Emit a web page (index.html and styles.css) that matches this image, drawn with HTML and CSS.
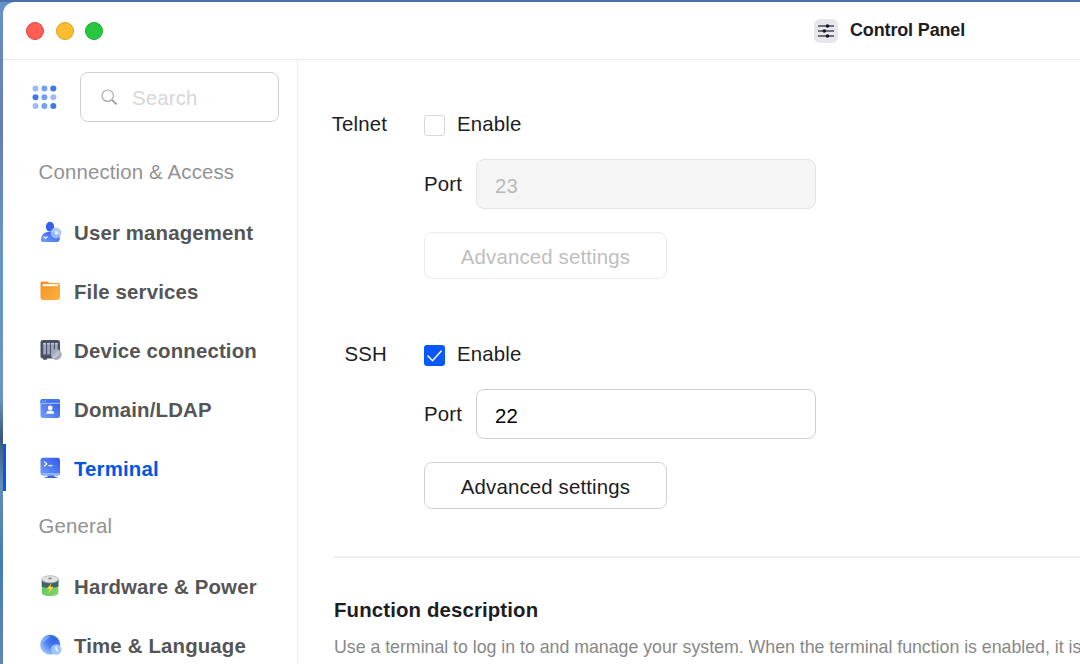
FILE: index.html
```html
<!DOCTYPE html>
<html lang="en">
<head>
<meta charset="utf-8">
<title>Control Panel</title>
<link rel="stylesheet" href="styles.css">
</head>
<body>
<div class="window">
  <header class="titlebar">
    <div class="lights"><span class="light red"></span><span class="light yellow"></span><span class="light green"></span></div>
    <div class="title">
      <svg class="title-icon" viewBox="0 0 24 24"><rect width="24" height="24" rx="6" fill="#e7e6ea"/><path d="M4 7H20M4 12H20M4 17H20" stroke="#4a4a5e" stroke-width="1.3"/><g fill="#15152a"><circle cx="13.5" cy="7" r="1.8"/><circle cx="10.3" cy="12" r="1.8"/><circle cx="13.5" cy="17" r="1.8"/></g></svg>
      <h1>Control Panel</h1>
    </div>
  </header>
  <div class="body">
    <aside class="sidebar">
      <div class="tools">
        <svg class="launcher" viewBox="0 0 25 25"><g fill="#3f78ea"><circle cx="3.5" cy="3.5" r="3" opacity=".5"/><circle cx="12.4" cy="3.5" r="3" opacity=".7"/><circle cx="21.3" cy="3.5" r="3"/><circle cx="3.5" cy="12.3" r="3"/><circle cx="12.4" cy="12.3" r="3" opacity=".7"/><circle cx="21.3" cy="12.3" r="3" opacity=".5"/><circle cx="3.5" cy="21.1" r="3" opacity=".5"/><circle cx="12.4" cy="21.1" r="3" opacity=".7"/><circle cx="21.3" cy="21.1" r="3"/></g></svg>
        <div class="search">
          <svg class="search-icon" viewBox="0 0 17 17"><circle cx="6.7" cy="6.7" r="5.7" fill="none" stroke="#a9a9a9" stroke-width="1.2"/><path d="M10.9 10.9L15.6 15.4" stroke="#999" stroke-width="1.7"/></svg>
          <span>Search</span>
        </div>
      </div>
      <h2 class="group">Connection &amp; Access</h2>
      <nav>
        <a class="item">
          <svg class="icon" viewBox="0 0 22 22"><defs><linearGradient id="blue" x1="0" y1="1" x2="1" y2="0"><stop stop-color="#77a1fa"/><stop offset="1" stop-color="#2c56e9"/></linearGradient></defs><path d="M1 19C1 14.500 3.500 11.500 8 11h5c4.500.5 6.800 3.500 6.800 6.500 0 2.200-1 3.500-3 3.500H3C1.500 21 1 20.500 1 19Z" fill="url(#blue)"/><ellipse cx="10" cy="5.800" rx="4.100" ry="5" fill="#3560eb"/><circle cx="16" cy="12" r="5.400" fill="#a4c2fd" opacity=".85"/><circle cx="16.300" cy="12" r="1.700" fill="#e7f0ff"/><path d="M3.500 15.500l2 2 2-2" fill="none" stroke="#e9f0ff" stroke-width="1.200"/></svg>
          <span>User management</span></a>
        <a class="item">
          <svg class="icon" viewBox="0 0 22 22"><defs><linearGradient id="orange" x1="0" y1="0" x2="1" y2="1"><stop stop-color="#f28e28"/><stop offset="1" stop-color="#ffb23b"/></linearGradient></defs><path d="M.5 4.500V3C.5 2 1.200 1.500 2 1.500h5.500L9.200 3h8.300C19 3 20 4 20 5.500V17c0 2-1 3-3 3H3.500c-2 0-3-1-3-3Z" fill="url(#orange)"/><path d="M2.500 6.200V5c0-.7.400-1 1-1h13.600c.6 0 1 .3 1 1v1.200Z" fill="#fff5df"/></svg>
          <span>File services</span></a>
        <a class="item">
          <svg class="icon" viewBox="0 0 22 22"><rect x=".5" y="1" width="19.500" height="18.500" rx="2.500" fill="#4c5067"/><path d="M3 19h4v1.700H3Z" fill="#4c5067"/><g fill="#9da5b9"><rect x="3.200" y="4" width="2.800" height="11.500" rx=".6"/><rect x="7.100" y="4" width="2.800" height="11.500" rx=".6"/><rect x="11" y="4" width="2.800" height="11.500" rx=".6"/><rect x="14.900" y="4" width="2.800" height="11.500" rx=".6"/></g><path d="M3.200 4.800H18" stroke="#d7dce7" stroke-width="1" stroke-dasharray="2.800 1.100"/><circle cx="16.300" cy="15.500" r="5.400" fill="#a5abba"/><path d="M13.200 16.700l4.300-4.200c2-.3 2.300.7 1.700 2.100l-4.300 4.200c-1.800.7-2.500-.5-1.700-2.100Z" fill="#d3d8e1"/><path d="M14 17.500l4.500-4.500" stroke="#7e8799" stroke-width=".7"/></svg>
          <span>Device connection</span></a>
        <a class="item">
          <svg class="icon" viewBox="0 0 22 22"><rect x=".5" y="1" width="19.500" height="19" rx="2.500" fill="url(#blue)"/><path d="M.5 5.500V3c0-1.500 1-2 2.500-2h14.500c1.500 0 2.500.5 2.500 2v2.500Z" fill="#4174f0"/><path d="M.5 5.400H20" stroke="#a9c6ff"/><path d="M2.300 3.200h1M4.800 3.200h1" stroke="#dce8ff"/><circle cx="10.200" cy="9.900" r="2.400" fill="#fff"/><path d="M6.200 15.800c0-2.200 1.700-3.300 4-3.300s4 1.100 4 3.300Z" fill="#fff"/></svg>
          <span>Domain/LDAP</span></a>
        <a class="item active">
          <svg class="icon" viewBox="0 0 22 22"><rect x=".5" y=".8" width="19.500" height="17.700" rx="2.500" fill="url(#blue)"/><path d="M1 16h18.700c-.2 1.800-1 2.500-2.500 2.500H3.500C2 18.500 1.200 17.700 1 16Z" fill="#91b1fb"/><path d="M4.500 20.400c2-.2 3.300-.8 4-1.900h5c.7 1.100 2.500 1.700 4 1.900v.6h-13Z" fill="#3967da"/><path d="M4.200 4.500l2.600 2.400-2.600 2.400M8.600 8.700h3.800" fill="none" stroke="#fff" stroke-width="1.200"/></svg>
          <span>Terminal</span></a>
      </nav>
      <h2 class="group">General</h2>
      <nav>
        <a class="item">
          <svg class="icon" viewBox="0 0 22 22"><defs><linearGradient id="green" x1="0" y1="0" x2="1" y2="1"><stop stop-color="#58bd61"/><stop offset="1" stop-color="#8bd570"/></linearGradient></defs><path d="M1.800 4.300v13.500c0 2 3.700 3.400 8.300 3.400s8.300-1.400 8.300-3.400V4.300Z" fill="url(#green)"/><path d="M1.800 4.300v7c2.500 2.300 13.800 2.300 16.600 0v-7Z" fill="#41616c"/><ellipse cx="10.100" cy="4.300" rx="8.200" ry="3.600" fill="#e1e4e2" stroke="#a5aaab" stroke-width=".7"/><ellipse cx="10.100" cy="3.500" rx="2" ry="1" fill="#8b9191"/><path d="M11.300 8.200L6.600 14h3l-1.200 4.300 5.200-6.500h-3.200Z" fill="#ffd52e"/></svg>
          <span>Hardware &amp; Power</span></a>
        <a class="item">
          <svg class="icon" viewBox="0 0 22 22"><defs><radialGradient id="globe" cx=".7" cy=".25" r=".8"><stop stop-color="#3461e5"/><stop offset=".5" stop-color="#4b80f1"/><stop offset="1" stop-color="#9bc3ff"/></radialGradient></defs><circle cx="10.200" cy="10.700" r="10" fill="url(#globe)"/><path d="M2.500 5C5 3 6.500 2.500 9 1.500c0 2-1.500 3.300-3 4.500S4 8 1 8.500Z" fill="#87b3ff" opacity=".8"/><circle cx="16.200" cy="15.500" r="5.200" fill="#a1c3ff"/><path d="M16.200 12.800v3l2 1.500" fill="none" stroke="#fff" stroke-width="1.200"/></svg>
          <span>Time &amp; Language</span></a>
      </nav>
    </aside>
    <main class="content">
      <section class="service">
        <div class="name">Telnet</div>
        <div class="fields">
          <label class="toggle"><span class="checkbox"></span>Enable</label>
          <div class="port"><span>Port</span><div class="input disabled">23</div></div>
          <div class="button disabled">Advanced settings</div>
        </div>
      </section>
      <section class="service">
        <div class="name">SSH</div>
        <div class="fields">
          <label class="toggle"><span class="checkbox checked"><svg viewBox="0 0 21 21"><path d="M3.500 10.500l5 5.200 9-10" fill="none" stroke="#fff" stroke-width="1.500"/></svg></span>Enable</label>
          <div class="port"><span>Port</span><div class="input">22</div></div>
          <div class="button">Advanced settings</div>
        </div>
      </section>
      <section class="description">
        <h2>Function description</h2>
        <p>Use a terminal to log in to and manage your system. When the terminal function is enabled, it is</p>
      </section>
    </main>
  </div>
</div>
</body>
</html>
```
FILE: styles.css
```css
* { box-sizing: border-box; }
html, body { height: 100%; }
body {
  margin: 0;
  padding: 2px 0 0 3px;
  overflow: hidden;
  font-family: "Liberation Sans", Arial, sans-serif;
  font-size: 20.4px;
  letter-spacing: .16px;
  color: #1d1d1f;
  background: linear-gradient(#4b6fa8, #4b6fa8) 0 0 / 100% 2px no-repeat, linear-gradient(#6790ca, #647eb1 20%, #6993c8 36%, #6c94c3 60%, #38577e 66%, #648cb7 73%, #467bb5 85%, #6286b4);
}
h1, h2, p { margin: 0; }
svg { display: block; flex: none; }
.window {
  display: flex;
  flex-direction: column;
  height: 662px;
  overflow: hidden;
  background: #fff;
  border-top-left-radius: 12px;
}
.titlebar {
  display: flex;
  align-items: center;
  flex: none;
  height: 58px;
  padding-left: 23px;
  border-bottom: 1px solid #e9e9e9;
}
.lights { display: flex; gap: 11.5px; width: 788px; }
.light { width: 18px; height: 18px; border-radius: 50%; border: 1px solid; }
.red { background: #ff5d56; border-color: #dd4642; }
.yellow { background: #fdbc2e; border-color: #dda024; }
.green { background: #27c840; border-color: #1eab30; }
.title { display: flex; align-items: center; gap: 12px; }
.title-icon { width: 24px; height: 24px; }
.title h1 { font-size: 18px; line-height: 22px; letter-spacing: -.15px; margin-top: -1px; white-space: nowrap; }
.body { display: flex; flex: 1; min-height: 0; }
.sidebar { flex: none; width: 295px; border-right: 1px solid #ececec; }
.tools { display: flex; align-items: center; gap: 23px; height: 84px; padding: 0 0 10px 29px; }
.launcher { width: 25px; height: 25px; }
.search {
  display: flex;
  align-items: center;
  gap: 14px;
  width: 199px;
  height: 50px;
  padding: 3px 0 0 20px;
  border: 1px solid #cecece;
  border-radius: 8px;
  color: #d6d6d6;
}
.search-icon { width: 17px; height: 17px; margin-top: -2px; }
.group {
  height: 59px;
  padding: 16px 0 0 35.5px;
  font-size: 20.4px;
  font-weight: 400;
  line-height: 24px;
  color: #929292;
}
.item {
  display: flex;
  align-items: center;
  gap: 12px;
  height: 59px;
  padding: 1px 0 0 37px;
  font-weight: 700;
  color: #555;
  white-space: nowrap;
}
.icon { width: 22px; height: 22px; margin-top: -2px; }
.active {
  color: #0055e9;
  background: linear-gradient(#0755ea, #0755ea) 0 5px / 3px 47px no-repeat;
}
.content { flex: 1; min-width: 0; padding: 50px 0 0 33px; }
.service { display: flex; gap: 37px; height: 230px; }
.name { width: 56px; line-height: 28px; text-align: right; }
.fields { display: flex; flex-direction: column; }
.toggle { display: flex; align-items: center; gap: 12px; line-height: 28px; height: 28px; }
.checkbox { width: 21px; height: 21px; margin-top: 2px; border: 1px solid #d7d7d7; border-radius: 3px; }
.checked { background: #0858fb; border: 0; }
.port { display: flex; align-items: center; gap: 14px; height: 50px; margin-top: 21px; }
.port span { width: 38px; margin-top: 1px; }
.input {
  width: 340px;
  height: 50px;
  padding: 2px 0 0 18px;
  line-height: 48px;
  border: 1px solid #d1d1d1;
  border-radius: 8px;
  color: #000;
}
.input.disabled { background: #f5f5f5; border-color: #e5e5e5; color: #b9b9b9; }
.button {
  width: 243px;
  height: 47px;
  margin-top: 23px;
  padding-top: 1px;
  line-height: 46px;
  border: 1px solid #d1d1d1;
  border-radius: 8px;
  text-align: center;
}
.button.disabled { border-color: #ebebeb; color: #bebebe; }
.description {
  margin: -14px 0 0 3px;
  padding-top: 39px;
  border-top: 2px solid #eee;
  white-space: nowrap;
}
.description h2 { font-size: 20.4px; line-height: 26px; letter-spacing: .13px; }
.description p { margin-top: 12px; font-size: 17.8px; line-height: 24px; letter-spacing: -.03px; color: #888; }
```
